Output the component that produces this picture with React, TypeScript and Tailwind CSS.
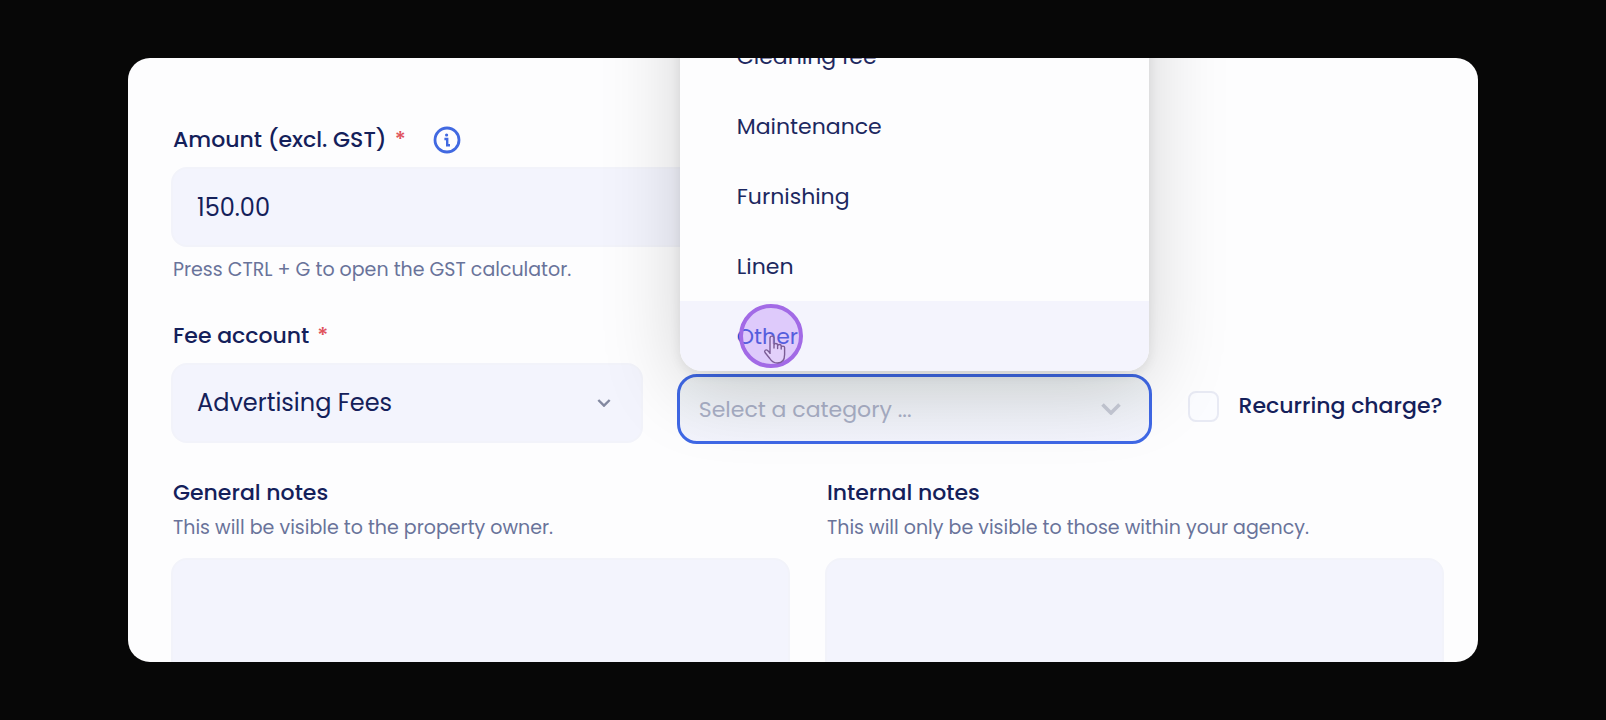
import React, { useState } from "react";

const CATEGORIES = ["Cleaning fee", "Maintenance", "Furnishing", "Linen", "Other"];

function Chevron({ className }: { className: string }) {
  return (
    <svg viewBox="0 0 20 12" fill="none" className={className} aria-hidden="true">
      <path d="M1.500 1.500l8.500 8.500 8.500-8.500" stroke="currentColor" strokeWidth="3.6" />
    </svg>
  );
}

function Required() {
  return <span className="ml-2 text-[#e0525c]">*</span>;
}

function InfoIcon() {
  return (
    <svg viewBox="0 0 28 28" fill="none" className="size-7" aria-hidden="true">
      <circle cx="14" cy="14" r="12" stroke="#4169e1" strokeWidth="2.8" />
      <circle cx="13.600" cy="9" r="1.600" fill="#4169e1" />
      <path d="M11.400 13h2.800v6.200h2.800" stroke="#4169e1" strokeWidth="2.400" />
    </svg>
  );
}

function Pointer() {
  return (
    <span className="pointer-events-none absolute top-[3px] left-[59px] size-16 rounded-full border-4 border-[#a26ae6] bg-[#b57cf5]/35">
      <svg viewBox="0 0 24 32" fill="none" className="absolute top-[26px] left-[20px] h-8 w-6">
        <path
          d="M7 20V4.200C7 1.400 11 1.400 11 4.200V14V11.200C11 9 14.600 9 14.600 11.200V14.500V12C14.600 10 18.200 10 18.200 12V15V13.500C18.200 11.600 21.600 11.600 21.600 13.500V20.500C21.600 26 19 29 14.500 29C10.500 29 8.600 27.500 6.800 24.500L2 18.500C.8 16.600 3 15 4.600 16.600L7 19"
          fill="#e6d3fb"
          fillOpacity="0.6"
          stroke="#7b5c96"
          strokeWidth="1.4"
          strokeLinejoin="round"
        />
      </svg>
    </span>
  );
}

function CategoryPicker() {
  const [active, setActive] = useState("Other");

  return (
    <div className="relative mt-[54px]">
      <button
        type="button"
        aria-haspopup="listbox"
        aria-expanded="true"
        className="flex h-[70px] w-full items-center justify-between rounded-[20px] border-3 border-[#3f68e6] bg-linear-to-b from-[#edf1f3] to-[#f3f4fd] pr-7 pl-[19px] text-[22px] text-[#a9afc6]"
      >
        Select a category ...
        <Chevron className="h-3 w-5 text-[#c6cad6]" />
      </button>
      <ul
        role="listbox"
        aria-label="Category"
        className="absolute inset-x-[3px] bottom-full z-10 mb-[3px] overflow-hidden rounded-[22px] bg-[#fdfdfe] pt-20 shadow-[0_16px_80px_rgba(0,0,0,0.17),0_4px_12px_rgba(0,0,0,0.08)]"
      >
        {CATEGORIES.map((name) => (
          <li
            key={name}
            role="option"
            aria-selected={name === active}
            className={
              name === active
                ? "relative bg-[#f4f4fd] text-[#1f4fd0]"
                : "relative text-[#1c2860]"
            }
          >
            <button
              type="button"
              onClick={() => setActive(name)}
              className="flex h-[70px] w-full items-center pl-[57px] text-[22px]"
            >
              {name}
            </button>
            {name === "Other" && <Pointer />}
          </li>
        ))}
      </ul>
    </div>
  );
}

function Notes({ id, title, hint }: { id: string; title: string; hint: string }) {
  return (
    <div className="flex flex-col">
      <label htmlFor={id} className="pl-0.5 text-[22px] leading-8 font-medium">
        {title}
      </label>
      <p className="mt-[5px] pl-0.5 text-[19px] leading-7 text-[#69739a]">{hint}</p>
      <textarea
        id={id}
        className="mt-4 h-48 w-full resize-none rounded-2xl border-2 border-[#f2f3fa] bg-[#f3f4fd] p-6 text-[22px]"
      />
    </div>
  );
}

export default function App() {
  return (
    <main className="flex h-screen bg-[#070707] px-32 py-[58px] font-['Poppins','Inter',sans-serif] text-[#14205a]">
      <form className="w-full overflow-hidden rounded-[22px] bg-[#fdfdfe] pt-[66px] pr-[34px] pl-[43px]">
        <div className="flex items-center pl-0.5">
          <label htmlFor="amount" className="text-[22px] leading-8 font-medium">
            Amount (excl. GST)
            <Required />
          </label>
          <button type="button" aria-label="About this amount" className="ml-[27px]">
            <InfoIcon />
          </button>
        </div>
        <input
          id="amount"
          defaultValue="150.00"
          className="mt-[11px] block h-20 w-3/5 rounded-2xl border-2 border-[#f2f3fa] bg-[#f3f4fd] px-6 text-2xl"
        />
        <p className="mt-[9px] pl-0.5 text-[19px] leading-7 text-[#69739a]">
          Press CTRL + G to open the GST calculator.
        </p>

        <div className="mt-9 grid grid-cols-[471fr_474fr_258fr] items-start gap-x-[34px]">
          <div>
            <label htmlFor="account" className="block pl-0.5 text-[22px] leading-8 font-medium">
              Fee account
              <Required />
            </label>
            <div className="relative mt-[11px]">
              <select
                id="account"
                className="block h-20 w-full appearance-none rounded-2xl border-2 border-[#f2f3fa] bg-[#f3f4fd] px-6 text-2xl"
              >
                <option>Advertising Fees</option>
              </select>
              <Chevron className="pointer-events-none absolute top-9 right-8 h-2 w-3.5 text-[#8288a0]" />
            </div>
          </div>
          <CategoryPicker />
          <label className="mt-[70px] flex items-center gap-5 pl-0.5 text-[22px] leading-8 font-medium whitespace-nowrap">
            <input
              type="checkbox"
              className="size-[31px] shrink-0 appearance-none rounded-lg border-2 border-[#e8eaf4] bg-[#fbfcff]"
            />
            Recurring charge?
          </label>
        </div>

        <div className="mt-[33px] grid grid-cols-2 gap-[35px]">
          <Notes
            id="general"
            title="General notes"
            hint="This will be visible to the property owner."
          />
          <Notes
            id="internal"
            title="Internal notes"
            hint="This will only be visible to those within your agency."
          />
        </div>
      </form>
    </main>
  );
}
